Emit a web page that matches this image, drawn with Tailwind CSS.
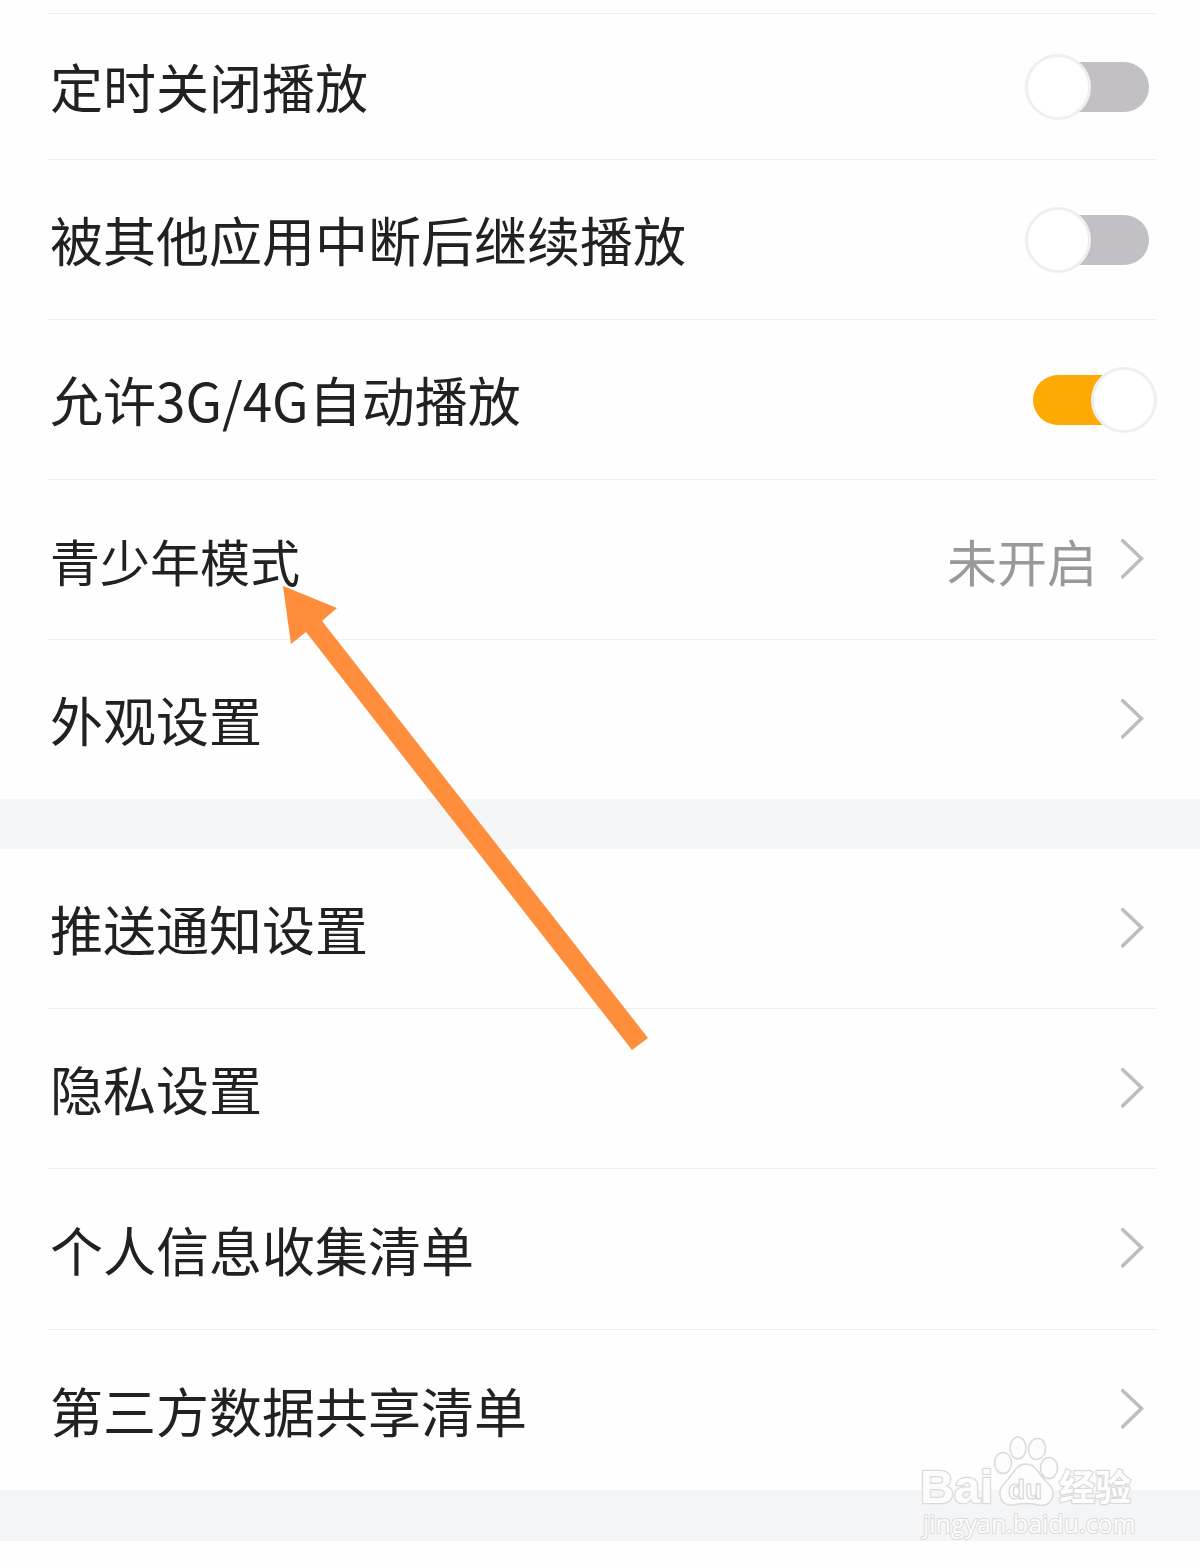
<!DOCTYPE html>
<html lang="zh-CN">
<head>
    <meta charset="UTF-8">
    <meta name="viewport" content="width=device-width, initial-scale=1.0">
    <title>设置</title>
    <script src="https://cdn.jsdelivr.net/npm/@tailwindcss/browser@4"></script>
</head>
<body class="relative min-h-screen overflow-x-hidden bg-[#fefefe] font-['Noto_Sans_CJK_SC',sans-serif] text-[53px] leading-none text-[#212121]">
    <!-- Playback settings -->
    <ul class="ml-12 mr-[43px] mt-[13px] divide-y divide-[#efefef] border-t border-[#efefef]">
        <li class="flex h-[146px] items-center justify-between pl-0.5">
            <label for="sleepTimer">定时关闭播放</label>
            <input id="sleepTimer" type="checkbox" class="relative h-[66px] w-[132px] shrink-0 cursor-pointer appearance-none before:absolute before:inset-x-2 before:inset-y-[8px] before:rounded-full before:bg-[#c2c0c5] after:absolute after:left-0 after:top-0 after:size-[66px] after:rounded-full after:border-3 after:border-[#efefef] after:bg-white checked:before:bg-[#ffa903] checked:after:left-[66px]">
        </li>
        <li class="flex h-[160px] items-center justify-between pl-0.5">
            <label for="resumePlay">被其他应用中断后继续播放</label>
            <input id="resumePlay" type="checkbox" class="relative h-[66px] w-[132px] shrink-0 cursor-pointer appearance-none before:absolute before:inset-x-2 before:inset-y-[8px] before:rounded-full before:bg-[#c2c0c5] after:absolute after:left-0 after:top-0 after:size-[66px] after:rounded-full after:border-3 after:border-[#efefef] after:bg-white checked:before:bg-[#ffa903] checked:after:left-[66px]">
        </li>
        <li class="flex h-[160px] items-center justify-between pl-0.5">
            <label for="mobileData">允许3G/4G自动播放</label>
            <input id="mobileData" type="checkbox" checked class="relative h-[66px] w-[132px] shrink-0 cursor-pointer appearance-none before:absolute before:inset-x-2 before:inset-y-[8px] before:rounded-full before:bg-[#c2c0c5] after:absolute after:left-0 after:top-0 after:size-[66px] after:rounded-full after:border-3 after:border-[#efefef] after:bg-white checked:before:bg-[#ffa903] checked:after:left-[66px]">
        </li>
        <li>
            <a href="#teen" class="flex h-[159px] items-center pl-0.5 pr-3 text-[50px]">
                <span>青少年模式</span>
                <span class="ml-auto mr-6 text-[#999999]">未开启</span>
                <svg class="h-[42px] w-6" viewBox="0 0 24 42" fill="none" stroke="#bdbdbd" stroke-width="3.5"><path d="M.5 .5 20.5 19.5 .5 39"/></svg>
            </a>
        </li>
        <li>
            <a href="#appearance" class="flex h-[159px] items-center justify-between pl-0.5 pr-3">
                <span>外观设置</span>
                <svg class="h-[42px] w-6" viewBox="0 0 24 42" fill="none" stroke="#bdbdbd" stroke-width="3.5"><path d="M.5 .5 20.5 19.5 .5 39"/></svg>
            </a>
        </li>
    </ul>

    <div class="h-[50px] bg-[#f4f5f7]"></div>

    <!-- Notifications and privacy -->
    <ul class="ml-12 mr-[43px]">
        <li class="border-b border-[#efefef]">
            <a href="#push" class="flex h-[159px] items-center justify-between pl-0.5 pr-3">
                <span>推送通知设置</span>
                <svg class="h-[42px] w-6" viewBox="0 0 24 42" fill="none" stroke="#bdbdbd" stroke-width="3.5"><path d="M.5 .5 20.5 19.5 .5 39"/></svg>
            </a>
        </li>
        <li class="border-b border-[#efefef]">
            <a href="#privacy" class="flex h-[159px] items-center justify-between pl-0.5 pr-3">
                <span>隐私设置</span>
                <svg class="h-[42px] w-6" viewBox="0 0 24 42" fill="none" stroke="#bdbdbd" stroke-width="3.5"><path d="M.5 .5 20.5 19.5 .5 39"/></svg>
            </a>
        </li>
        <li class="border-b border-[#efefef]">
            <a href="#collected" class="flex h-[160px] items-center justify-between pl-0.5 pr-3">
                <span>个人信息收集清单</span>
                <svg class="h-[42px] w-6" viewBox="0 0 24 42" fill="none" stroke="#bdbdbd" stroke-width="3.5"><path d="M.5 .5 20.5 19.5 .5 39"/></svg>
            </a>
        </li>
        <li>
            <a href="#shared" class="flex h-[160px] items-center justify-between pl-0.5 pr-3">
                <span>第三方数据共享清单</span>
                <svg class="h-[42px] w-6" viewBox="0 0 24 42" fill="none" stroke="#bdbdbd" stroke-width="3.5"><path d="M.5 .5 20.5 19.5 .5 39"/></svg>
            </a>
        </li>
    </ul>

    <footer class="relative h-[51px] bg-[#f4f5f7]">
        <!-- Watermark -->
        <svg class="absolute bottom-0 right-[60px] h-[107px] w-[222px]" viewBox="0 0 222 107" fill="#fdfdfd" stroke="#dadada" stroke-width="1.5" stroke-linejoin="round">
            <ellipse cx="85" cy="29" rx="8.5" ry="10.5"/>
            <ellipse cx="100" cy="14" rx="8" ry="11"/>
            <ellipse cx="119" cy="15" rx="8.5" ry="10.5" transform="rotate(8 119 15)"/>
            <ellipse cx="131" cy="34" rx="8.5" ry="10.5"/>
            <g paint-order="stroke" stroke-width="2.5">
                <text x="2" y="69" font-family="Liberation Sans, sans-serif" font-size="47" font-weight="700">Bai</text>
                <text x="141" y="67" font-family="Noto Sans CJK SC, sans-serif" font-size="36" font-weight="700">经验</text>
                <text x="5" y="99" font-family="Open Sans, sans-serif" font-size="25" font-weight="500" stroke-width="2">jingyan.baidu.com</text>
            </g>
            <path d="M108 30C99 30 96 38 91 44C86 50 81 53 82 61C83 68 88 72 95 71C104 69 112 69 120 71C128 73 134 68 135 61C136 53 130 50 125 44C120 38 117 30 108 30Z"/>
            <text x="90" y="65" font-family="Liberation Sans, sans-serif" font-size="28" font-weight="700" stroke="#cfcfcf" stroke-width="1">du</text>
        </svg>
    </footer>

    <!-- Pointer to the teen mode row -->
    <svg class="pointer-events-none absolute left-[283px] top-[586px] h-[465px] w-[366px]" viewBox="0 0 366 465" fill="#fe8d3c">
        <path d="M0 0 54 22 39 35 365 452 349 464 23 46 8 58Z"/>
    </svg>
</body>
</html>
